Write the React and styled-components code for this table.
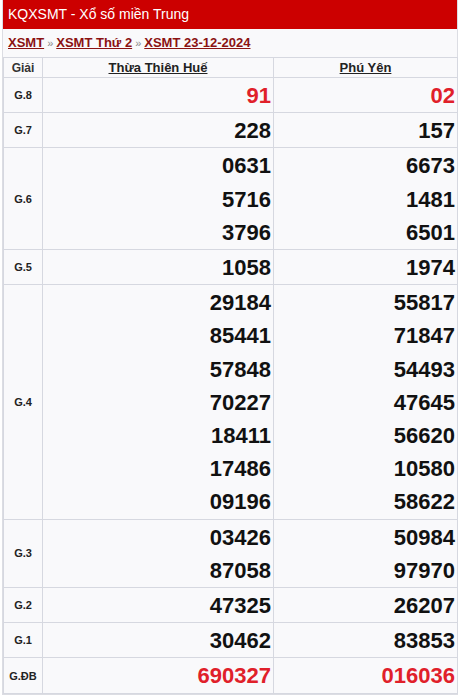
import React from 'react';
import styled, { createGlobalStyle } from 'styled-components';

const GlobalStyle = createGlobalStyle`
    body {
        margin: 0;
        background: #fff;
        font-family: "Liberation Sans", Arial, sans-serif;
    }
`;

const Box = styled.div`
    width: 456px;
    margin-left: 2px;
    border: 1px solid #dcdde3;
    border-top: none;
    box-sizing: border-box;
    background: #f9f9fb;
`;

const Title = styled.h2`
    margin: 0;
    height: 29px;
    line-height: 29px;
    padding-left: 5px;
    background: #cc0000;
    color: #fff;
    font-size: 14px;
    font-weight: normal;
`;

const Crumbs = styled.div`
    height: 28px;
    line-height: 28px;
    padding-left: 5px;
    font-size: 13px;
    font-weight: bold;
    color: #888;
`;

const Crumb = styled.a`
    color: #8b1212;
    text-decoration: underline;
`;

const Sep = styled.span`
    font-size: 11px;
    font-weight: normal;
    color: #888;
    margin: 0 3px;
`;

const Table = styled.table`
    width: 455px;
    border-collapse: collapse;
    table-layout: fixed;
    background: #f9f9fb;
`;

const Th = styled.th`
    border: 1px solid #d6d8e0;
    height: 19px;
    padding: 0;
    text-align: center;
    font-size: ${p => (p.$small ? '12px' : '13px')};
    font-weight: bold;
    color: ${p => (p.$small ? '#333' : '#222')};
    text-decoration: ${p => (p.$small ? 'none' : 'underline')};
`;

const Label = styled.td`
    border: 1px solid #d6d8e0;
    padding: 0;
    text-align: center;
    vertical-align: middle;
    font-size: 11px;
    font-weight: bold;
    color: #222;
`;

const Cell = styled.td`
    border: 1px solid #d6d8e0;
    padding: 1px 2px 0 0;
    text-align: right;
    vertical-align: top;
`;

const Num = styled.div`
    line-height: 33.2px;
    font-size: 22px;
    font-weight: bold;
    color: ${p => (p.$red ? '#e0202a' : '#111')};
`;

const rows = [
    { g: 'G.8', red: true, a: ['91'], b: ['02'] },
    { g: 'G.7', a: ['228'], b: ['157'] },
    { g: 'G.6', a: ['0631', '5716', '3796'], b: ['6673', '1481', '6501'] },
    { g: 'G.5', a: ['1058'], b: ['1974'] },
    {
        g: 'G.4',
        a: ['29184', '85441', '57848', '70227', '18411', '17486', '09196'],
        b: ['55817', '71847', '54493', '47645', '56620', '10580', '58622']
    },
    { g: 'G.3', a: ['03426', '87058'], b: ['50984', '97970'] },
    { g: 'G.2', a: ['47325'], b: ['26207'] },
    { g: 'G.1', a: ['30462'], b: ['83853'] },
    { g: 'G.ĐB', red: true, a: ['690327'], b: ['016036'] }
];

export default function App() {
    return (
        <>
            <GlobalStyle />
            <Box>
                <Title>KQXSMT - Xổ số miền Trung</Title>
                <Crumbs>
                    <Crumb>XSMT</Crumb>
                    <Sep>»</Sep>
                    <Crumb>XSMT Thứ 2</Crumb>
                    <Sep>»</Sep>
                    <Crumb>XSMT 23-12-2024</Crumb>
                </Crumbs>
                <Table>
                    <colgroup>
                        <col style={{ width: 39 }} />
                        <col style={{ width: 231 }} />
                        <col style={{ width: 184 }} />
                    </colgroup>
                    <thead>
                        <tr>
                            <Th $small>Giải</Th>
                            <Th>Thừa Thiên Huế</Th>
                            <Th>Phú Yên</Th>
                        </tr>
                    </thead>
                    <tbody>
                        {rows.map(r => (
                            <tr key={r.g}>
                                <Label>{r.g}</Label>
                                <Cell>
                                    {r.a.map(n => <Num key={n} $red={r.red}>{n}</Num>)}
                                </Cell>
                                <Cell>
                                    {r.b.map(n => <Num key={n} $red={r.red}>{n}</Num>)}
                                </Cell>
                            </tr>
                        ))}
                    </tbody>
                </Table>
            </Box>
        </>
    );
}
